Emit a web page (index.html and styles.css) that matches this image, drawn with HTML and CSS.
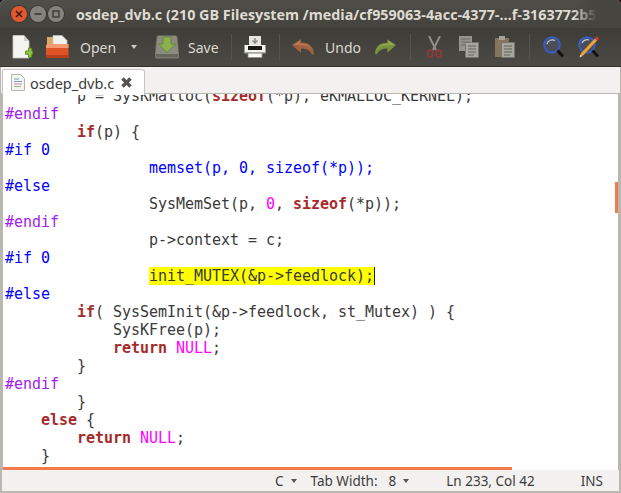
FILE: index.html
```html
<!DOCTYPE html>
<html lang="en">
<head>
<meta charset="utf-8">
<title>osdep_dvb.c</title>
<link rel="stylesheet" href="styles.css">
</head>
<body>
<div class="window">
  <header class="titlebar">
    <div class="controls">
      <span class="ctl close"><svg viewBox="0 0 10 10" width="10" height="10"><path d="M2 2l6 6M8 2l-6 6" stroke="#3b1a10" stroke-width="1.600"/></svg></span>
      <span class="ctl"><svg viewBox="0 0 10 10" width="10" height="10"><path d="M1.500 5h7" stroke="#33322e" stroke-width="1.600"/></svg></span>
      <span class="ctl"><svg viewBox="0 0 10 10" width="10" height="10"><rect x="2" y="2" width="6" height="6" fill="none" stroke="#33322e" stroke-width="1.300"/></svg></span>
    </div>
    <div class="title">osdep_dvb.c (210 GB Filesystem /media/cf959063-4acc-4377-…f-3163772b5</div>
  </header>
  <nav class="toolbar">
    <svg class="ic new" viewBox="0 0 21 24" width="21" height="24">
      <path d="M1 0.500h11l5 5.500v17H1z" fill="#f4f4f0" stroke="#c9c9c3" stroke-width=".8"/>
      <path d="M12 .5v5.500h5z" fill="#cfcfc9"/>
      <path d="M13.500 16h3v-3h3.300v3h1v3.300h-1v3h-3.300v-3h-3z" fill="#8cc63f" stroke="#4f7a1c" stroke-width=".8"/>
    </svg>
    <svg class="ic open" viewBox="0 0 24 24" width="24" height="24">
      <path d="M2 2h9v10H2z" fill="#dca769"/>
      <path d="M8 .5h9l5 5v8H8z" fill="#f1f1ed" stroke="#c2c2bc" stroke-width=".7"/>
      <path d="M1 10l2-1h20.500v14H1z" fill="#df5426"/>
      <path d="M1 10l2-1h20.500v4H1z" fill="#f39a70"/>
      <path d="M1 20h22.500v3H1z" fill="#b93f18"/>
    </svg>
    <span class="label open-label">Open</span>
    <span class="caret"></span>
    <svg class="ic save" viewBox="0 0 24 24" width="24" height="24">
      <path d="M3.500 .5h17q1.500 0 1.800 2L24 19v3q0 1.500-1.500 1.500h-21Q0 23.500 0 22v-3L1.700 2.500Q2 .5 3.500 .5z" fill="#8b8b7f" stroke="#5d5d54" stroke-width=".6"/>
      <path d="M1 19h22v3.500H1z" fill="#66665d"/>
      <path d="M8 2h8v7h4.500L12 17.500 3.500 9H8z" fill="#8cb04c" stroke="#5f7f2c" stroke-width=".8"/>
    </svg>
    <span class="label save-label">Save</span>
    <span class="sep sep-a"></span>
    <svg class="ic print" viewBox="0 0 22 22" width="22" height="22">
      <path d="M5 0h12v9H5z" fill="#e4e4e0"/>
      <path d="M11 2v4M8.500 4.500L11 7l2.500-2.500" stroke="#8b8b86" fill="none" stroke-width="1.500"/>
      <path d="M.5 9h21v8H.5z" fill="#f3f3ef"/>
      <path d="M4 10h14v4H4z" fill="#1b1b19"/>
      <path d="M4 17h14v4.500H4z" fill="#fbfbf8" stroke="#8f8f89" stroke-width=".8"/>
      <path d="M.5 16h21v1.500H.5z" fill="#a9a9a3"/>
    </svg>
    <span class="sep sep-b"></span>
    <svg class="ic undo" viewBox="0 0 22 16" width="22" height="16">
      <path d="M0 6L9 0v3.500c7 0 12 3 13 10.500q0 2-2 1.500c-2-4-5.500-6-11-6V14z" fill="#a0623f"/>
      <path d="M1.500 6L8 1.500v3c6 0 10 2 12 6C17 7 13 6 8 6z" fill="#b87a52"/>
    </svg>
    <span class="label undo-label">Undo</span>
    <svg class="ic redo" viewBox="0 0 22 16" width="21" height="16">
      <path d="M22 6l-9-6v3.500C6 3.500 1 6.500 0 14q0 2 2 1.500c2-4 5.500-6 11-6V14z" fill="#7d923d"/>
      <path d="M20.500 6L14 1.500v3c-6 0-10 2-12 6C5 7 9 6 14 6z" fill="#93a852"/>
    </svg>
    <span class="sep sep-c"></span>
    <svg class="ic cut" viewBox="0 0 15 22" width="15" height="22">
      <path d="M2 0l7 14M13 0L6 14" stroke="#8f8f87" stroke-width="2" fill="none"/>
      <ellipse cx="3.200" cy="17.500" rx="2.500" ry="3.600" fill="none" stroke="#93383a" stroke-width="1.800"/>
      <ellipse cx="11.800" cy="17.500" rx="2.500" ry="3.600" fill="none" stroke="#93383a" stroke-width="1.800"/>
    </svg>
    <svg class="ic copy" viewBox="0 0 20 22" width="20" height="22">
      <path d="M0 0h13v15H0z" fill="#94948d"/>
      <path d="M2 3h9M2 6h9M2 9h9" stroke="#6b6b65"/>
      <path d="M6.500 6.500h13v15h-13z" fill="#a6a69f" stroke="#74746e" stroke-width=".8"/>
      <path d="M9 10h8M9 13h8M9 16h8M9 19h6" stroke="#63635d"/>
    </svg>
    <svg class="ic paste" viewBox="0 0 20 22" width="20" height="22">
      <path d="M0 2h14v19H0z" fill="#84755c"/>
      <path d="M4 0h6v4H4z" fill="#a3a39b"/>
      <path d="M6.500 6.500h13v15h-13z" fill="#a6a69f" stroke="#74746e" stroke-width=".8"/>
      <path d="M9 10h8M9 13h8M9 16h8M9 19h6" stroke="#63635d"/>
    </svg>
    <span class="sep sep-d"></span>
    <svg class="ic find" viewBox="0 0 21 22" width="21" height="22">
      <circle cx="9" cy="9" r="7.800" fill="#4b4e58" stroke="#3a5cc0" stroke-width="2"/>
      <path d="M4 8a5.500 5.500 0 0 1 8-3.500" stroke="#c8cbd4" fill="none" stroke-width="1.300"/>
      <path d="M14.500 14.500l5.500 6" stroke="#141412" stroke-width="3"/>
    </svg>
    <svg class="ic replace" viewBox="0 0 22 22" width="22" height="22">
      <circle cx="9" cy="9" r="7.800" fill="#4b4e58" stroke="#3a5cc0" stroke-width="2"/>
      <path d="M4 7a5.500 5.500 0 0 1 7-3" stroke="#c8cbd4" fill="none" stroke-width="1.300"/>
      <path d="M14.500 14.500l5.500 6" stroke="#141412" stroke-width="3"/>
      <path d="M3.500 19L18 3.500" stroke="#eda233" stroke-width="3.200"/>
      <path d="M18 3.500l2-2" stroke="#d8373c" stroke-width="3.200"/>
      <path d="M4.500 20l-3 1.500 1-3z" fill="#f3e3c4"/>
    </svg>
  </nav>
  <div class="tabs">
    <div class="tab">
      <svg class="doc" viewBox="0 0 14 17" width="14" height="17"><path d="M.5.5h9l4 4v12H.5z" fill="#f4f4f1" stroke="#b5b5b0"/><path d="M3 5h5M3 7.500h8" stroke="#7d9ec4"/><path d="M3 10h8" stroke="#c58ab0"/><path d="M3 12.500h7" stroke="#98b58a"/></svg>
      <span class="tabname">osdep_dvb.c</span>
      <svg class="x" viewBox="0 0 13 13" width="13" height="13"><path d="M2.500 2.500l8 8M10.500 2.500l-8 8" stroke="#55534e" stroke-width="3.400"/></svg>
    </div>
  </div>
  <main class="editor">
<pre class="code first">        p = SysKMalloc(<b class="kw">sizeof</b>(*p), eKMALLOC_KERNEL);</pre>
<pre class="code"><span class="pre2">#endif</span>
        <b class="kw">if</b>(p) {
<span class="off">#if 0</span>
                <span class="off">memset(p, 0, sizeof(*p));</span>
<span class="off">#else</span>
                SysMemSet(p, <span class="num">0</span>, <b class="kw">sizeof</b>(*p));
<span class="pre2">#endif</span>
                p-&gt;context = c;
<span class="off">#if 0</span>
                <span class="hl">init_MUTEX(&amp;p-&gt;feedlock);</span>
<span class="off">#else</span>
        <b class="kw">if</b>( SysSemInit(&amp;p-&gt;feedlock, st_Mutex) ) {
            SysKFree(p);
            <b class="kw">return</b> <span class="num">NULL</span>;
        }
<span class="pre2">#endif</span>
        }
    <b class="kw">else</b> {
        <b class="kw">return</b> <span class="num">NULL</span>;
    }</pre>
    <div class="mark-h"></div>
    <div class="mark-v"></div>
  </main>
  <footer class="status">
    <span class="st st-c">C<i class="tri"></i></span>
    <span class="st st-tab">Tab Width:<span class="tabval">8</span><i class="tri"></i></span>
    <span class="st st-pos">Ln 233, Col 42</span>
    <span class="st st-ins">INS</span>
  </footer>
</div>
</body>
</html>
```
FILE: styles.css
```css
* { box-sizing: border-box; }
html, body { margin: 0; height: 100%; background: #1e0f14; overflow: hidden; }
.window {
  width: 621px; height: 493px; display: flex; flex-direction: column;
  border-radius: 5px 5px 0 0; overflow: hidden; background: #f2f1f0;
}
.titlebar {
  height: 28px; flex: none; display: flex; align-items: center;
  background: linear-gradient(#504e48, #44423d); position: relative;
  padding-left: 11px;
}
.controls { display: flex; gap: 2.500px; width: 65px; flex: none; }
.ctl {
  width: 16px; height: 16px; border-radius: 50%; background: #85837b;
  display: flex; align-items: center; justify-content: center;
  box-shadow: 0 0 0 1px #3a3935;
}
.close { background: #e0582f; }
.title {
  font: bold 14.330px "Open Sans", "Noto Sans", sans-serif; color: #dfdbd2;
  white-space: nowrap; overflow: hidden; flex: 1;
}
.titlebar::after {
  content: ""; position: absolute; right: 0; top: 0; bottom: 0; width: 48px;
  background: linear-gradient(90deg, rgba(70,68,63,0), #47453f 50%);
}
.toolbar {
  height: 39px; flex: none; display: flex; align-items: center;
  background: linear-gradient(#3d3c38, #4b4a44); padding-left: 12px;
  color: #dcd8cf; font: 14px "Noto Sans", "Open Sans", sans-serif;
  border-bottom: 1px solid #33322e;
}
.ic { flex: none; display: block; }
.label { flex: none; }
.open { margin-left: 12px; }
.open-label { margin-left: 11px; width: 35px; }
.caret {
  width: 0; height: 0; border: 3px solid transparent; border-top: 4px solid #d0cdc5;
  border-bottom: 0; margin-left: 16px; flex: none;
}
.save { margin-left: 18px; }
.save-label { margin-left: 9px; width: 31px; }
.sep { width: 1px; height: 26px; background: #55534d; flex: none; }
.sep-a { margin-left: 12px; }
.print { margin-left: 12px; }
.sep-b { margin-left: 13px; }
.undo { margin-left: 12px; }
.undo-label { margin-left: 11px; width: 35px; }
.redo { margin-left: 15px; }
.sep-c { margin-left: 14px; }
.cut { margin-left: 16px; }
.copy { margin-left: 17px; }
.paste { margin-left: 16px; }
.sep-d { margin-left: 14px; }
.find { margin-left: 13px; }
.replace { margin-left: 14px; }
.tabs {
  height: 27px; flex: none; background: #f2f1f0; padding: 2px 0 0 2px;
  display: flex; border-left: 1px solid #b8b6b0; border-right: 1px solid #b8b6b0;
  border-bottom: 1px solid #b9b7b1; position: relative;
}
.tab {
  width: 143px; height: 26px; background: #fff; border: 1px solid #c8c6c0; border-bottom: 0;
  border-radius: 3px 3px 0 0; display: flex; align-items: center; padding-left: 8px;
  font: 14.500px "Noto Sans", "Open Sans", sans-serif; color: #3c3c3c;
  position: relative; z-index: 2; margin-left: -1px;
}
.doc { margin-right: 5px; flex: none; }
.tabname { flex: none; }
.x { margin-left: 6px; flex: none; }
.editor {
  height: 376px; flex: none; background: #fff; position: relative; overflow: hidden;
  border-left: 3px solid #b9b7b1; border-right: 3px solid #b9b7b1;
  padding-left: 2px;
}
.code {
  margin: 0; font: 15px/18px "DejaVu Sans Mono", monospace; color: #3a3a3a; letter-spacing: -0.030px;
}
.first { margin-top: -7px; }
.kw { color: #a52a2a; font-weight: bold; }
.num { color: #ff00ff; }
.off { color: #0000ff; }
.pre2 { color: #a020f0; }
.hl { background: #ffff00; color: #3a3a3a; box-shadow: 1px 0 0 #222; }
.mark-h { position: absolute; left: 0; bottom: 0; width: 509px; height: 3px; background: #f57a4a; }
.mark-v { position: absolute; right: 0; top: 88px; width: 3px; height: 31px; background: #f57a4a; }
.status {
  height: 23px; flex: none; display: flex; align-items: center; background: #f2f1f0;
  font: 13.500px "Noto Sans", "Open Sans", sans-serif; color: #3c3c3c; position: relative;
  border-left: 2px solid #b9b7b1; border-right: 2px solid #b9b7b1; border-bottom: 2px solid #b9b7b1;
}
.st { white-space: nowrap; flex: none; display: flex; align-items: center; }
.st-c { margin-left: 273px; }
.st-tab { margin-left: 14px; }
.tabval { margin-left: 11px; }
.st-pos { margin-left: 37px; }
.st-ins { margin-left: 46px; }
.tri {
  width: 0; height: 0; border: 3.500px solid transparent; border-top: 4px solid #555;
  border-bottom: 0; margin-left: 7px;
}
```
